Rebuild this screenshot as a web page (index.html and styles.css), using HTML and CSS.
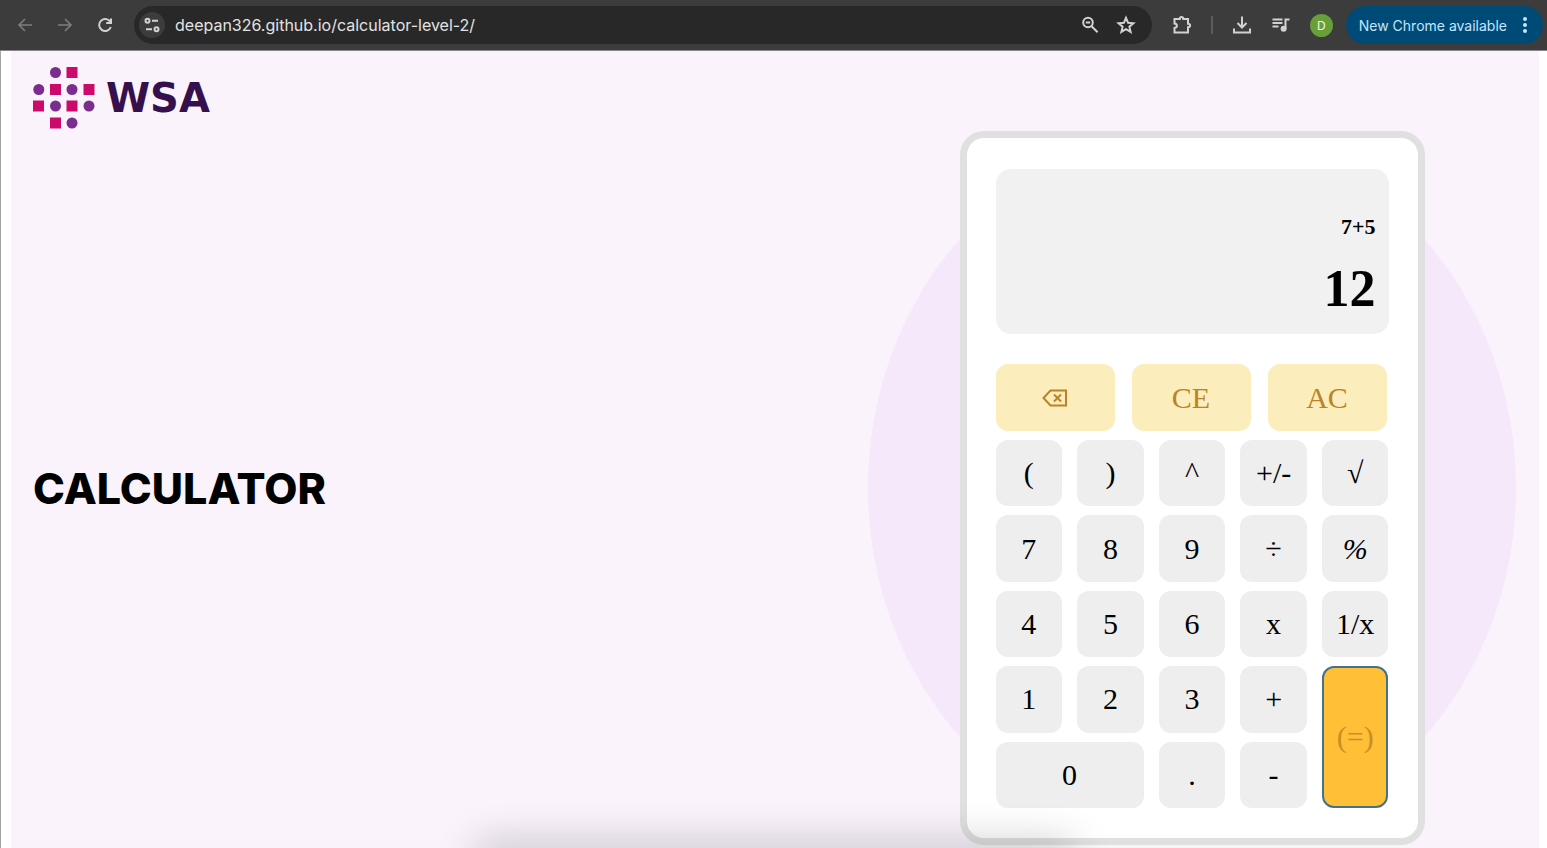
FILE: index.html
```html
<!DOCTYPE html>
<html lang="en">
<head>
<meta charset="utf-8">
<meta name="viewport" content="width=device-width, initial-scale=1">
<title>Calculator</title>
<link rel="stylesheet" href="styles.css">
</head>
<body>
<header class="toolbar">
  <nav class="nav" aria-label="Browser navigation">
    <button class="icon-btn dim" aria-label="Back"><svg viewBox="0 0 20 20"><path d="M17 10H4M10 4l-6 6 6 6"/></svg></button>
    <button class="icon-btn dim" aria-label="Forward"><svg viewBox="0 0 20 20"><path d="M3 10h13M10 4l6 6-6 6"/></svg></button>
    <button class="icon-btn" aria-label="Reload"><svg viewBox="0 0 20 20"><path d="M15.6 7.5A6 6 0 1 0 15.8 12M16 3.5V8h-4.8"/></svg></button>
  </nav>
  <div class="omnibox">
    <button class="site-info" aria-label="Site information"><svg viewBox="0 0 20 20"><circle cx="5.5" cy="5.7" r="2"/><path d="M10 5.7h6M4 14.3h6"/><circle cx="14.5" cy="14.3" r="2"/></svg></button>
    <input class="url" type="text" aria-label="Address" value="deepan326.github.io/calculator-level-2/">
    <button class="icon-btn" aria-label="Zoom"><svg viewBox="0 0 20 20"><circle cx="8" cy="7.5" r="4.8"/><path d="M11.6 11.2l6 6M5.8 7.5h4.4"/></svg></button>
    <button class="icon-btn" aria-label="Bookmark"><svg viewBox="0 0 20 20"><path d="M10 2.8l2.1 5 5.3.4-4 3.5 1.2 5.2-4.6-2.8-4.6 2.8 1.2-5.2-4-3.5 5.3-.4z"/></svg></button>
  </div>
  <div class="actions">
    <button class="icon-btn" aria-label="Extensions"><svg viewBox="0 0 20 20"><path d="M2.500 4h5.300C7.800 1.300 11.200 1.300 11.200 4H16v4.800c2.800 0 2.800 3.400 0 3.400V17.500H2.500v-4.600c3.200-.4 3.200-4 0-4.400z"/></svg></button>
    <span class="divider"></span>
    <button class="icon-btn" aria-label="Downloads"><svg viewBox="0 0 20 20"><path d="M10 1.500v10.500M5.500 8l4.500 4.500L14.500 8M2 13.500v4h16v-4"/></svg></button>
    <button class="icon-btn" aria-label="Media"><svg viewBox="0 0 20 20"><path d="M1.500 4.500h10M1.500 8h10M1.500 11.500h6M14.500 14V4.500h4"/><circle class="solid" cx="12.600" cy="13.700" r="2"/></svg></button>
    <button class="avatar" aria-label="Profile">D</button>
    <button class="update">New Chrome available<svg viewBox="0 0 4 18" aria-hidden="true"><circle cx="2" cy="3" r="2"/><circle cx="2" cy="9" r="2"/><circle cx="2" cy="15" r="2"/></svg></button>
  </div>
</header>

<main class="page">
  <div class="logo">
    <svg class="mark" viewBox="0 0 62 62" aria-hidden="true">
      <g fill="#7b2c8f"><circle cx="22.500" cy="5.500" r="5.500"/><circle cx="5.800" cy="22.500" r="5.500"/><circle cx="39" cy="22.500" r="5.500"/><circle cx="22.500" cy="39" r="5.500"/><circle cx="56" cy="39" r="5.500"/><circle cx="39" cy="56" r="5.500"/></g>
      <g fill="#cc0a6c"><path d="M33.500 0h11v11h-11zM17 17h11v11H17zM50.500 17h11v11h-11zM0 33.500h11v11H0zM33.500 33.500h11v11h-11zM17 50.500h11v11H17z"/></g>
    </svg>
    <span class="wordmark">WSA</span>
  </div>

  <div class="hero">
    <h1 class="title">CALCULATOR</h1>
    <section class="stage" aria-label="Calculator">
      <div class="calc">
        <div class="display">
          <div class="expression">7+5</div>
          <output class="result">12</output>
        </div>
        <div class="clears">
          <button class="key clear" aria-label="Backspace"><svg viewBox="0 0 26 18"><path d="M8.500 1.500h15.500v15H8.500L1.500 9zM12 5.500l7 7M19 5.500l-7 7"/></svg></button>
          <button class="key clear">CE</button>
          <button class="key clear">AC</button>
        </div>
        <div class="keys">
          <button class="key">(</button><button class="key">)</button><button class="key">^</button><button class="key">+/-</button><button class="key">√</button>
          <button class="key">7</button><button class="key">8</button><button class="key">9</button><button class="key">÷</button><button class="key percent">%</button>
          <button class="key">4</button><button class="key">5</button><button class="key">6</button><button class="key">x</button><button class="key">1/x</button>
          <button class="key">1</button><button class="key">2</button><button class="key">3</button><button class="key">+</button><button class="key equals">(=)</button>
          <button class="key zero">0</button><button class="key">.</button><button class="key">-</button>
        </div>
      </div>
    </section>
  </div>
  <div class="dock-shadow"></div>
</main>
</body>
</html>
```
FILE: styles.css
```css
* { box-sizing: border-box; }

body {
  margin: 0;
  min-height: 100vh;
  display: flex;
  flex-direction: column;
  background: #fff;
  font-family: Inter, "Liberation Sans", sans-serif;
  color: #000;
}

button, input {
  border: 0;
  padding: 0;
  margin: 0;
  font: inherit;
  color: inherit;
  background: none;
}

/* Browser toolbar */
.toolbar {
  display: flex;
  align-items: center;
  height: 51px;
  padding: 0 4px 0 15px;
  background: #3c3c3c;
  border-bottom: 1px solid #88858a;
  color: #d2d2d2;
}

.nav { display: flex; gap: 20px; margin-right: 19px; }

.icon-btn { width: 20px; height: 20px; flex: none; }
.icon-btn svg, .site-info svg {
  display: block;
  width: 20px;
  height: 20px;
  fill: none;
  stroke: currentColor;
  stroke-width: 2;
}
.icon-btn .solid { fill: currentColor; }
.dim { color: #7d7d7d; }
.dim svg { stroke-width: 1.6; }

.omnibox {
  flex: 1;
  display: flex;
  align-items: center;
  gap: 16px;
  height: 38px;
  padding: 0 16px 0 5px;
  border-radius: 19px;
  background: #282828;
}
.site-info {
  width: 26px;
  height: 26px;
  padding: 3px;
  border-radius: 50%;
  background: #3c3c3c;
}
.url {
  flex: 1;
  min-width: 0;
  margin-left: -6px;
  font-size: 16px;
  color: #e3e3e3;
}

.actions { display: flex; align-items: center; gap: 19px; margin-left: 20px; }
.divider { width: 2px; height: 18px; background: #5c5c5c; }
.avatar {
  width: 23px;
  height: 23px;
  border-radius: 50%;
  background: #689f38;
  color: #f2f6ee;
  font-size: 12px;
}
.update {
  display: flex;
  align-items: center;
  gap: 16px;
  height: 38px;
  margin-left: -6px;
  padding: 0 16px 0 13px;
  border-radius: 19px;
  background: #004a77;
  color: #c2e7ff;
  font-size: 14px;
}
.update svg { width: 4px; height: 18px; fill: currentColor; }

/* Page */
.page {
  flex: 1;
  position: relative;
  overflow: hidden;
  border-left: 1px solid #a3a3a3;
  padding: 0 8px 0 10px;
  background: #faf3fc content-box;
  display: flex;
  flex-direction: column;
  z-index: 0;
}

.logo {
  display: flex;
  align-items: center;
  gap: 11px;
  height: 80px;
  padding: 14px 22px 0;
}
.mark { width: 62px; height: 62px; }
.wordmark {
  font-family: "DejaVu Sans", sans-serif;
  font-size: 40px;
  font-weight: 700;
  line-height: 1;
  color: #35104d;
}

.hero {
  flex: 1;
  display: flex;
  align-items: center;
  justify-content: space-between;
  padding: 0 23px 3px 22px;
}
.title { margin: 0; font-size: 43px; font-weight: 800; }

.stage {
  width: 648px;
  display: flex;
  justify-content: center;
  position: relative;
}
.stage::before {
  content: "";
  position: absolute;
  z-index: -1;
  inset: 0;
  border-radius: 50%;
  background: #f4e8fa;
}

.calc {
  width: 465px;
  padding: 31px 29px 30px;
  border: 7px solid #e1e0e1;
  border-radius: 24px;
  background: #fff;
  font-family: "Liberation Serif", "Times New Roman", serif;
}
.display {
  display: flex;
  flex-direction: column;
  justify-content: flex-end;
  gap: 20px;
  height: 165px;
  padding: 16px 13px;
  border-radius: 15px;
  background: #f1f1f1;
  text-align: right;
  font-weight: 700;
}
.expression { font-size: 22px; }
.result { font-size: 52px; line-height: 58px; }

.clears {
  display: grid;
  grid-template-columns: repeat(3, 1fr);
  gap: 17px;
  margin: 30px 2px 9px 0;
}
.keys {
  display: grid;
  grid-template-columns: repeat(5, 1fr);
  grid-template-rows: repeat(5, 1fr);
  gap: 9px 15px;
  height: 368px;
}
.key {
  display: flex;
  align-items: center;
  justify-content: center;
  border-radius: 12px;
  background: #eee;
  font-size: 30px;
}
.clear { height: 67px; background: #fcedbc; color: #ba8426; }
.clear svg {
  width: 26px;
  height: 18px;
  fill: none;
  stroke: currentColor;
  stroke-width: 2;
}
.percent { font-style: italic; }
.zero { grid-column: span 2; }
.equals {
  grid-column: 5;
  grid-row: 4 / span 2;
  border: 2px solid #43738a;
  background: #ffbf37;
  color: #c88f22;
}

/* Soft shade rising from the bottom edge */
.dock-shadow {
  position: absolute;
  top: 100%;
  left: 31%;
  right: 31%;
  height: 20px;
  box-shadow: 0 0 40px 4px rgba(0, 0, 0, 0.24);
}
```
